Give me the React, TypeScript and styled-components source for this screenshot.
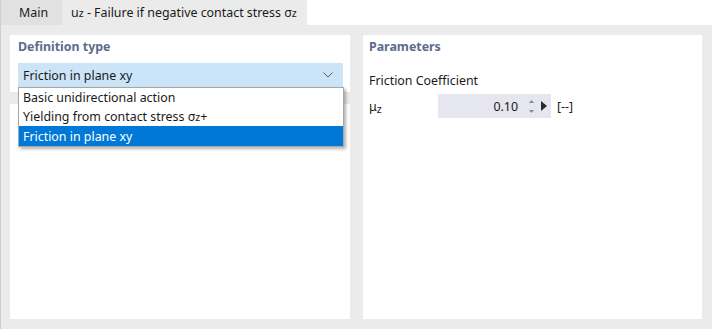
import React from "react";
import styled, { createGlobalStyle } from "styled-components";

const Global = createGlobalStyle`
  html, body { margin: 0; padding: 0; background: #ffffff; }
  body { font-family: "Noto Sans", "Segoe UI", sans-serif; font-size: 12.4px; color: #1a1a1a; }
  * { box-sizing: border-box; }
`;

const Frame = styled.div`
  width: 712px;
  height: 329px;
  display: flex;
  flex-direction: column;
  border-left: 1px solid #cfcfcf;
  background: #ebebeb;
`;

const TabBar = styled.div`
  height: 25px;
  display: flex;
  background: #ffffff;
`;

const Tab = styled.div<{ $active?: boolean }>`
  display: flex;
  align-items: center;
  height: 25px;
  padding: ${(p) => (p.$active ? "0 10px 0 9px" : "0 14px 0 18px")};
  background: ${(p) => (p.$active ? "#ebebeb" : "#e1e1e1")};
  white-space: nowrap;
`;

const Sub = styled.sub`
  font-size: 10.5px;
  vertical-align: -2px;
  line-height: 0;
`;

const Content = styled.div`
  flex: 1;
  display: grid;
  grid-template-columns: 340px 339px;
  column-gap: 13px;
  padding: 10px 10px 10px 9px;
`;

const Column = styled.div`
  display: flex;
  flex-direction: column;
  gap: 12px;
  position: relative;
`;

const Panel = styled.div<{ $grow?: boolean; $pad?: string }>`
  background: #ffffff;
  padding: ${(p) => p.$pad ?? "3px 7px 0 8px"};
  ${(p) => (p.$grow ? "flex: 1;" : "")}
`;

const Heading = styled.div`
  font-weight: 700;
  color: #5d6b8c;
  height: 17px;
  line-height: 17px;
`;

const Combo = styled.div`
  margin-top: 8px;
  height: 24px;
  background: #cce4f7;
  display: flex;
  align-items: center;
  justify-content: space-between;
  padding: 0 10px 0 5px;
`;

const DropList = styled.div`
  position: absolute;
  top: 52px;
  left: 8px;
  width: 326px;
  background: #ffffff;
  border: 1px solid #a8a8a8;
  box-shadow: 2px 2px 3px rgba(0, 0, 0, 0.3);
  z-index: 2;
`;

const Item = styled.div<{ $selected?: boolean }>`
  height: ${(p) => (p.$selected ? "20px" : "19px")};
  display: flex;
  align-items: center;
  padding-left: 4px;
  background: ${(p) => (p.$selected ? "#0078d7" : "transparent")};
  color: ${(p) => (p.$selected ? "#ffffff" : "#1a1a1a")};
`;

const Label = styled.div`
  margin-top: 17px;
  height: 17px;
  line-height: 17px;
`;

const Row = styled.div`
  margin-top: 5px;
  display: flex;
  align-items: center;
  height: 24px;
`;

const RowLabel = styled.div`
  width: 69px;
`;

const Input = styled.div`
  width: 113px;
  height: 24px;
  background: #e6e6f0;
  display: flex;
  align-items: center;
  justify-content: flex-end;
  padding-right: 4px;
  gap: 7px;
`;

const Value = styled.span`
  margin-right: 4px;
`;

const Unit = styled.span`
  margin-left: 6px;
`;

const Chevron = () => (
  <svg width="10" height="6" viewBox="0 0 10 6">
    <path d="M0.5 0.5 L5 5 L9.5 0.5" fill="none" stroke="#5a5a5a" strokeWidth="1" />
  </svg>
);

const Spinner = () => (
  <svg width="5" height="13" viewBox="0 0 5 13">
    <path d="M2.5 0 L5 3 L0 3 Z" fill="#8a8a8a" />
    <path d="M2.5 13 L5 10 L0 10 Z" fill="#8a8a8a" />
  </svg>
);

const Play = () => (
  <svg width="6" height="10" viewBox="0 0 6 10">
    <path d="M0 0 L6 5 L0 10 Z" fill="#2a2a2a" />
  </svg>
);

export default function App() {
  return (
    <>
      <Global />
      <Frame>
        <TabBar>
          <Tab>Main</Tab>
          <Tab $active>
            u<Sub>z</Sub>&nbsp;- Failure if negative contact stress σ<Sub>z</Sub>
          </Tab>
        </TabBar>
        <Content>
          <Column>
            <Panel $pad="3px 7px 5px 8px">
              <Heading>Definition type</Heading>
              <Combo>
                <span>Friction in plane xy</span>
                <Chevron />
              </Combo>
            </Panel>
            <Panel $grow />
            <DropList>
              <Item>Basic unidirectional action</Item>
              <Item>
                Yielding from contact stress σ<Sub>z</Sub>+
              </Item>
              <Item $selected>Friction in plane xy</Item>
            </DropList>
          </Column>
          <Panel $pad="3px 6px 0 6px">
            <Heading>Parameters</Heading>
            <Label>Friction Coefficient</Label>
            <Row>
              <RowLabel>
                μ<Sub>z</Sub>
              </RowLabel>
              <Input>
                <Value>0.10</Value>
                <Spinner />
                <Play />
              </Input>
              <Unit>[--]</Unit>
            </Row>
          </Panel>
        </Content>
      </Frame>
    </>
  );
}
